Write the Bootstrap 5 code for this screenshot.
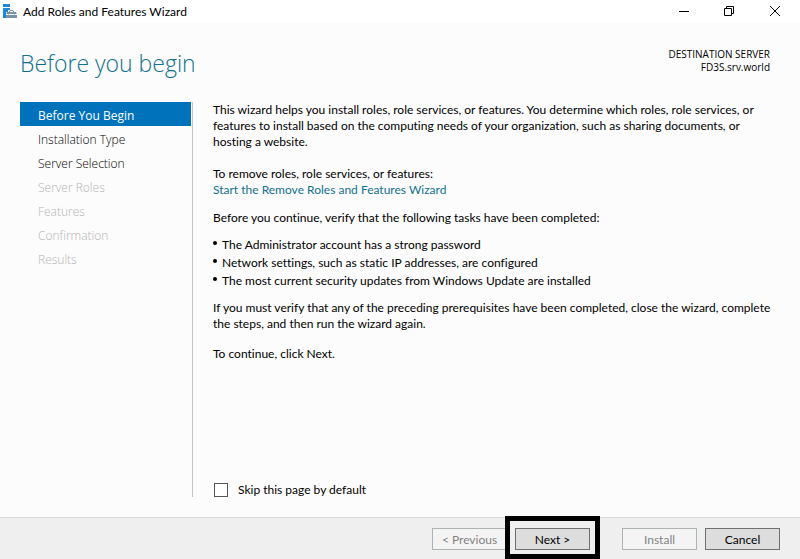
<!DOCTYPE html>
<html lang="en">
<head>
<meta charset="utf-8">
<meta name="viewport" content="width=device-width, initial-scale=1">
<title>Add Roles and Features Wizard</title>
<link href="https://cdn.jsdelivr.net/npm/bootstrap@5.3.0/dist/css/bootstrap.min.css" rel="stylesheet">
<style>
body { font-family: Lato, "Open Sans", sans-serif; font-size: 12px; line-height: 16px; font-variant-ligatures: none; color: #000; background: #fcfcfc; }
.title-bar { height: 23px; background: #fff; padding-left: 3px; padding-right: 2px; }
.title-bar h1 { font-size: 12px; line-height: 23px; font-weight: 400; margin-left: 5px; }
.win-btn { width: 46px; height: 21px; border: 0; background: transparent; padding: 0; line-height: 0; }
.page-head { padding: 24px 30px 0 20px; height: 79px; }
.page-head h2 { font-family: "Open Sans", sans-serif; font-size: 23px; line-height: 32px; font-weight: 300; color: #11708f; }
.destination { font-family: "Open Sans", sans-serif; font-size: 10px; line-height: 13px; padding-top: 1px; }
.steps { font-family: "Open Sans", sans-serif; width: 173px; margin-left: 20px; border-right: 1px solid #c4c4c4; margin-bottom: 20px; flex: none; }
.step { display: block; width: 171px; height: 24px; line-height: 24px; padding: 2px 0 0 18px; font-size: 12px; font-weight: 300; color: #000; text-decoration: none; }
.step.current { background: #0072bc; color: #fff; font-weight: 400; }
.step.locked { color: #b4b4b4; }
.step-text { padding: 0 16px 19px 20px; }
.step-text a { color: #11708f; text-decoration: none; }
.lead-in { margin-bottom: 12px; }
.tasks-intro, .tasks { margin-bottom: 10px; }
.tasks { list-style: none; line-height: 18px; }
.tasks li::before { content: ""; width: 4px; height: 4px; border-radius: 2px; background: #000; margin: 5px 5px 0 0; }
.prereq { margin-bottom: 14px; }
.skip { margin-left: 1px; }
.skip .form-check-input { width: 14px; height: 14px; margin: 0 10px 0 0; border: 1px solid #555; border-radius: 0; background-color: #fff; }
.wizard-foot { height: 42px; background: #efefef; border-top: 1px solid #dadada; padding: 10px 20px 0 0; }
.wizard-foot .btn { width: 75px; height: 22px; padding: 1px 0 0; font-size: 12px; line-height: 20px; border-radius: 0; border: 1px solid #707070; background: #ddd; color: #000; }
.wizard-foot .btn:disabled { border-color: #adb2b5; background: #f4f4f4; color: #838383; opacity: 1; }
.next-slot { margin-left: 8px; margin-right: 32px; height: 22px; }
.marker { left: -10px; right: -10px; top: -12px; height: 43px; border: 5px solid #000; pointer-events: none; }
</style>
</head>
<body class="d-flex flex-column min-vh-100">
<header class="title-bar d-flex">
  <svg class="mt-1" width="15" height="15" viewBox="0 0 15 15" aria-hidden="true">
    <path fill="#1e88dc" d="M0 0h7v3H0zM0 4h7v2H5v2H3v6H0z"/>
    <path fill="#7893a8" d="M4 8h9l1 2.500H3zM3 11h11v3H3z"/><path fill="none" stroke="#7893a8" d="M6 8.500L7 6.500h3L11 8.500"/>
    <path fill="#fff" d="M3 10h2v1H3zM6 10h5v1H6zM12 10h2v1h-2z"/>
  </svg>
  <h1 class="mb-0 me-auto">Add Roles and Features Wizard</h1>
  <button class="win-btn" aria-label="Minimize"><svg width="12" height="12"><path d="M2 6.500h10" stroke="#000"/></svg></button>
  <button class="win-btn" aria-label="Restore"><svg width="12" height="12" fill="none" stroke="#000"><path d="M1.500 3.500h7v7h-7zM3.500 3V1.500h7v7H9"/></svg></button>
  <button class="win-btn" aria-label="Close"><svg width="12" height="12"><path d="M1 1l10 10M11 1L1 11" stroke="#000"/></svg></button>
</header>
<div class="page-head d-flex justify-content-between">
  <h2 class="mb-0">Before you begin</h2>
  <div class="destination text-end">DESTINATION SERVER<br>FD3S.srv.world</div>
</div>
<main class="d-flex flex-grow-1">
  <nav class="steps" aria-label="Wizard steps">
    <a class="step current" href="#" aria-current="step">Before You Begin</a>
    <a class="step" href="#">Installation Type</a>
    <a class="step" href="#">Server Selection</a>
    <a class="step locked" aria-disabled="true">Server Roles</a>
    <a class="step locked" aria-disabled="true">Features</a>
    <a class="step locked" aria-disabled="true">Confirmation</a>
    <a class="step locked" aria-disabled="true">Results</a>
  </nav>
  <section class="step-text flex-grow-1 d-flex flex-column">
    <p class="mb-3">This wizard helps you install roles, role services, or features. You determine which roles, role services, or<br>features to install based on the computing needs of your organization, such as sharing documents, or<br>hosting a website.</p>
    <p class="lead-in">To remove roles, role services, or features:<br><a href="#">Start the Remove Roles and Features Wizard</a></p>
    <p class="tasks-intro">Before you continue, verify that the following tasks have been completed:</p>
    <ul class="tasks p-0">
      <li class="d-flex">The Administrator account has a strong password</li>
      <li class="d-flex">Network settings, such as static IP addresses, are configured</li>
      <li class="d-flex">The most current security updates from Windows Update are installed</li>
    </ul>
    <p class="prereq">If you must verify that any of the preceding prerequisites have been completed, close the wizard, complete<br>the steps, and then run the wizard again.</p>
    <p class="mb-0">To continue, click Next.</p>
    <div class="skip d-flex align-items-center mt-auto">
      <input class="form-check-input" type="checkbox" id="skip"><label for="skip">Skip this page by default</label>
    </div>
  </section>
</main>
<footer class="wizard-foot d-flex justify-content-end">
  <button class="btn" type="button" disabled>&lt; Previous</button>
  <div class="next-slot position-relative">
    <button class="btn" type="button">Next &gt;</button>
    <span class="marker position-absolute"></span>
  </div>
  <button class="btn me-2" type="button" disabled>Install</button>
  <button class="btn" type="button">Cancel</button>
</footer>
<script src="https://cdn.jsdelivr.net/npm/bootstrap@5.3.0/dist/js/bootstrap.bundle.min.js"></script>
</body>
</html>
